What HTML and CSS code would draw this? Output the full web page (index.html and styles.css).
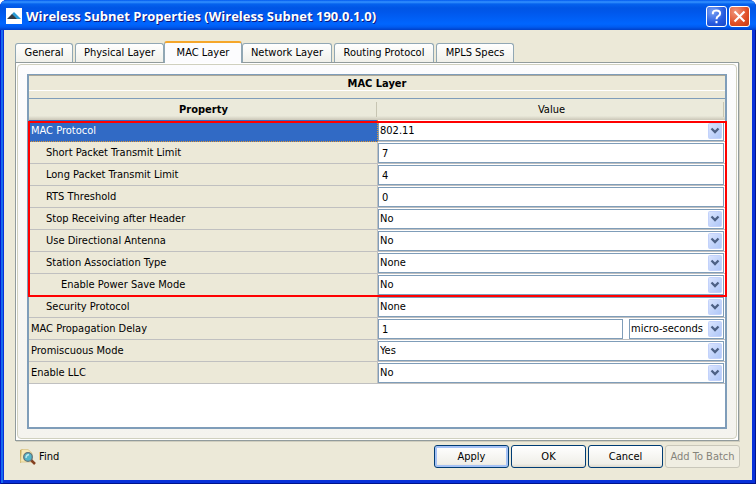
FILE: index.html
```html
<!DOCTYPE html>
<html lang="en">
<head>
<meta charset="utf-8">
<title>Wireless Subnet Properties</title>
<link rel="stylesheet" href="styles.css">
</head>
<body>
<svg width="0" height="0" class="defs" aria-hidden="true">
  <symbol id="chevron" viewBox="0 0 14 16">
    <rect x="0.5" y="0.5" width="13" height="15" rx="1" fill="url(#arrow-fill)" stroke="#c3d2fb"/>
    <path d="M3.5 5.5 L7 9 L10.500 5.500" fill="none" stroke="#4d6185" stroke-width="2.300"/>
  </symbol>
  <linearGradient id="arrow-fill" x1="0" y1="0" x2="1" y2="1">
    <stop offset="0" stop-color="#dbe5fe"/><stop offset="1" stop-color="#adc6f8"/>
  </linearGradient>
</svg>
<main class="window">
  <header class="titlebar">
    <svg class="app-icon" viewBox="0 0 16 16" aria-hidden="true">
      <rect width="16" height="16" fill="#fff"/>
      <path d="M8 4 L15 11 H10.500 L5.500 6.500 Z" fill="#2a9bd5"/>
      <path d="M1 11 L6 6 L11 11 Z" fill="#343b42"/>
    </svg>
    <h1>Wireless Subnet Properties (Wireless Subnet 190.0.1.0)</h1>
    <button class="caption help" aria-label="Help">
      <svg viewBox="0 0 21 21" aria-hidden="true"><path d="M6.500 8 V6.500 Q7 4 10.500 4 Q14.500 4 14.500 7.300 Q14.500 9 12.500 10 Q10.500 11 10.500 13.500 M10.500 15.500 V18" fill="none" stroke="#fff" stroke-width="2.200"/></svg>
    </button>
    <button class="caption close" aria-label="Close">
      <svg viewBox="0 0 21 21" aria-hidden="true"><path d="M5 5 L16 16 M16 5 L5 16" fill="none" stroke="#fff" stroke-width="2.300"/></svg>
    </button>
  </header>
  <div class="client">
    <div class="tabs" role="tablist">
      <button class="tab general" role="tab">General</button>
      <button class="tab physical" role="tab">Physical Layer</button>
      <button class="tab mac" role="tab" aria-selected="true">MAC Layer</button>
      <button class="tab network" role="tab">Network Layer</button>
      <button class="tab routing" role="tab">Routing Protocol</button>
      <button class="tab mpls" role="tab">MPLS Specs</button>
    </div>
    <section class="panel" role="tabpanel">
      <div class="panel-inner">
        <div class="sheet">
          <h2>MAC Layer</h2>
          <table>
            <colgroup><col class="property-col"><col></colgroup>
            <thead>
              <tr><th class="property-head" scope="col">Property</th><th scope="col">Value</th></tr>
            </thead>
            <tbody class="marked">
              <tr class="selected">
                <th scope="row"><label for="protocol">MAC Protocol</label></th>
                <td><div class="combo"><select id="protocol"><option>802.11</option></select><svg class="arrow"><use href="#chevron"/></svg></div></td>
              </tr>
              <tr>
                <th scope="row" class="level-1"><label for="short">Short Packet Transmit Limit</label></th>
                <td><input id="short" type="text" value="7"></td>
              </tr>
              <tr>
                <th scope="row" class="level-1"><label for="long">Long Packet Transmit Limit</label></th>
                <td><input id="long" type="text" value="4"></td>
              </tr>
              <tr>
                <th scope="row" class="level-1"><label for="rts">RTS Threshold</label></th>
                <td><input id="rts" type="text" value="0"></td>
              </tr>
              <tr>
                <th scope="row" class="level-1"><label for="stop">Stop Receiving after Header</label></th>
                <td><div class="combo"><select id="stop"><option>No</option></select><svg class="arrow"><use href="#chevron"/></svg></div></td>
              </tr>
              <tr>
                <th scope="row" class="level-1"><label for="antenna">Use Directional Antenna</label></th>
                <td><div class="combo"><select id="antenna"><option>No</option></select><svg class="arrow"><use href="#chevron"/></svg></div></td>
              </tr>
              <tr>
                <th scope="row" class="level-1"><label for="association">Station Association Type</label></th>
                <td><div class="combo"><select id="association"><option>None</option></select><svg class="arrow"><use href="#chevron"/></svg></div></td>
              </tr>
              <tr>
                <th scope="row" class="level-2"><label for="power">Enable Power Save Mode</label></th>
                <td><div class="combo"><select id="power"><option>No</option></select><svg class="arrow"><use href="#chevron"/></svg></div></td>
              </tr>
            </tbody>
            <tbody>
              <tr>
                <th scope="row" class="level-1"><label for="security">Security Protocol</label></th>
                <td><div class="combo"><select id="security"><option>None</option></select><svg class="arrow"><use href="#chevron"/></svg></div></td>
              </tr>
              <tr>
                <th scope="row"><label for="delay">MAC Propagation Delay</label></th>
                <td>
                  <div class="with-unit">
                    <input id="delay" type="text" value="1">
                    <div class="combo unit"><select aria-label="Delay unit"><option>micro-seconds</option></select><svg class="arrow"><use href="#chevron"/></svg></div>
                  </div>
                </td>
              </tr>
              <tr>
                <th scope="row"><label for="promiscuous">Promiscuous Mode</label></th>
                <td><div class="combo"><select id="promiscuous"><option>Yes</option></select><svg class="arrow"><use href="#chevron"/></svg></div></td>
              </tr>
              <tr>
                <th scope="row"><label for="llc">Enable LLC</label></th>
                <td><div class="combo"><select id="llc"><option>No</option></select><svg class="arrow"><use href="#chevron"/></svg></div></td>
              </tr>
            </tbody>
          </table>
        </div>
      </div>
    </section>
    <footer class="actions">
      <button class="find">
        <svg viewBox="0 0 16 16" aria-hidden="true">
          <path d="M0 1 L3 0 V12 L0 14 Z" fill="#c9a957"/>
          <path d="M1.500 0.500 H8 L12 4 V13 H0.500 Z" fill="#f6e8b4" stroke="#d5c080" stroke-width=".7"/>
          <path d="M11 11 L15 15" stroke="#84401f" stroke-width="2.500"/>
          <circle cx="8" cy="8" r="4.300" fill="#54b5c9" stroke="#61737b" stroke-width="1.300"/>
          <path d="M6 9 Q6 6 9 5.500" fill="none" stroke="#bce8ed" stroke-width="1.300"/>
        </svg>
        <span>Find</span>
      </button>
      <button class="push default">Apply</button>
      <button class="push">OK</button>
      <button class="push">Cancel</button>
      <button class="push" disabled>Add To Batch</button>
    </footer>
  </div>
</main>
</body>
</html>
```
FILE: styles.css
```css
* { box-sizing: border-box; }

body {
  margin: 0;
  background: #fff;
  color: #000;
  font: 11px/14px "DejaVu Sans Condensed", "DejaVu Sans", sans-serif;
}

button, input, select {
  margin: 0;
  color: inherit;
  font: inherit;
}

.defs { position: absolute; }

.window {
  display: flex;
  flex-direction: column;
  min-height: 100vh;
  padding: 0 4px 4px;
  background: #0831d9;
  border-radius: 7px 7px 0 0;
  box-shadow: inset 1px 0 #0019cf, inset -1px -1px #00138c, inset 3px 0 #166aee;
  overflow: hidden;
}

.titlebar {
  display: flex;
  align-items: center;
  height: 30px;
  margin: 0 -4px;
  padding: 2px 6px 0;
  background: linear-gradient(#0058ee 0, #3593ff 2px, #0562ee 4px, #0055e5 8px, #0057eb 12px, #0066ff 24px, #005bf0 27px, #0040c8 30px);
}

.app-icon { width: 16px; height: 16px; margin-right: 4px; }

h1 {
  flex: 1;
  margin: 0;
  color: #fff;
  font: bold 13px/18px "Open Sans", sans-serif;
  text-shadow: 1px 1px #0a1883;
}

.caption {
  width: 21px;
  height: 21px;
  margin-left: 2px;
  padding: 0;
  border: 1px solid #fff;
  border-radius: 3px;
  background: radial-gradient(circle at 30% 25%, #7ba2f4, #2459df 60%, #1849c8);
}

.caption svg { display: block; width: 19px; height: 19px; }
.close { background: radial-gradient(circle at 30% 25%, #f0967c, #e04e25 60%, #c83a12); }

.client {
  display: flex;
  flex: 1;
  flex-direction: column;
  padding: 11px 12px 12px 11px;
  background: #ece9d8;
}

.tabs {
  display: flex;
  align-items: flex-end;
  height: 21px;
}

.tab {
  height: 19px;
  margin-right: 2px;
  padding: 0;
  border: 1px solid #91a7b4;
  border-bottom: 0;
  border-radius: 3px 3px 0 0;
  background: linear-gradient(#fff, #f0f0ea);
  white-space: nowrap;
}

.general { width: 58px; }
.physical { width: 89px; margin-right: 0; }
.mac {
  z-index: 1;
  width: 78px;
  height: 22px;
  margin: 0 0 -1px;
  border-top: 2px solid #f5a62a;
  background: #fcfcfe;
}
.network { width: 90px; }
.routing { width: 100px; }
.mpls { width: 78px; }

.panel {
  display: flex;
  flex: 1;
  margin-right: 1px;
  padding: 1px;
  border: 1px solid #919b9c;
  background: #fff;
  box-shadow: 1px 1px #d0cebf;
}

.panel-inner {
  display: flex;
  flex: 1;
  padding: 9px;
  border: 1px solid #d0d0bf;
  border-radius: 4px;
  background: linear-gradient(#fcfcfe, #f4f3ee);
}

.sheet {
  flex: 1;
  border: 1px solid #7f9db9;
  border-width: 1px 2px 2px;
  background: #fff;
}

h2 {
  height: 23px;
  margin: 0;
  padding-top: 1px;
  border-bottom: 7px solid #ece9d8;
  background: #ece9d8;
  box-shadow: inset 0 1px #aca899, inset 0 -1px #fff;
  font: bold 11px/15px "DejaVu Sans Condensed", "DejaVu Sans", sans-serif;
  text-align: center;
}

table {
  width: 100%;
  border-collapse: separate;
  border-spacing: 0;
  table-layout: fixed;
}

.property-col { width: 349px; }

thead th {
  height: 22px;
  padding: 0;
  border-top: 1px solid #7f9db9;
  background: linear-gradient(#c7c5b2, #c7c5b2) right 1px center / 1px 15px no-repeat, linear-gradient(#ebeadb 80%, #cbc7b8);
  font-weight: normal;
}

thead .property-head { font-weight: bold; }

tbody th {
  height: 22px;
  padding: 1px 0 0 2px;
  border: 0 solid #c0c0c0;
  border-width: 0 1px 1px 0;
  background: #ece9d8;
  font-weight: normal;
  line-height: 14px;
  text-align: left;
}

tbody .level-1 { padding-left: 17px; }
tbody .level-2 { padding-left: 32px; }

tbody .selected th {
  border-color: #e0972f;
  border-style: dotted;
  background: #316ac5;
  color: #fff;
}

td {
  height: 22px;
  padding: 1px 1px 0 0;
  border-bottom: 1px solid #c0c0c0;
  background: #fff;
}

input, select {
  display: block;
  width: 100%;
  height: 20px;
  padding: 0 3px;
  border: 1px solid #7f9db9;
  border-radius: 0;
  outline: 0;
  background: #fff;
}

select { padding: 0 16px 0 1px; appearance: none; }

.combo { position: relative; }

.arrow {
  position: absolute;
  top: 2px;
  right: 2px;
  width: 14px;
  height: 16px;
  pointer-events: none;
}

.with-unit { display: flex; gap: 6px; }
.unit { flex: 0 0 95px; }

.marked { position: relative; }

.marked::after {
  position: absolute;
  z-index: 2;
  inset: 1px -2px -1px -1px;
  border: 2px solid #f00;
  content: "";
  pointer-events: none;
}

.actions {
  display: flex;
  align-items: center;
  gap: 2px;
  margin-top: 4px;
}

.find {
  display: flex;
  align-items: center;
  gap: 3px;
  margin-right: auto;
  padding: 0 5px;
  border: 0;
  background: none;
}

.find svg { width: 16px; height: 16px; }

.push {
  width: 75px;
  height: 23px;
  padding: 0;
  border: 1px solid #003c74;
  border-radius: 3px;
  background: linear-gradient(#fff, #f0efe9 85%, #dcd8cc);
  white-space: nowrap;
}

.default { box-shadow: inset 0 0 0 2px #a5c2f5; }

.push:disabled {
  border-color: #c9c7ba;
  background: #f0eee2;
  color: #85837a;
}
```
